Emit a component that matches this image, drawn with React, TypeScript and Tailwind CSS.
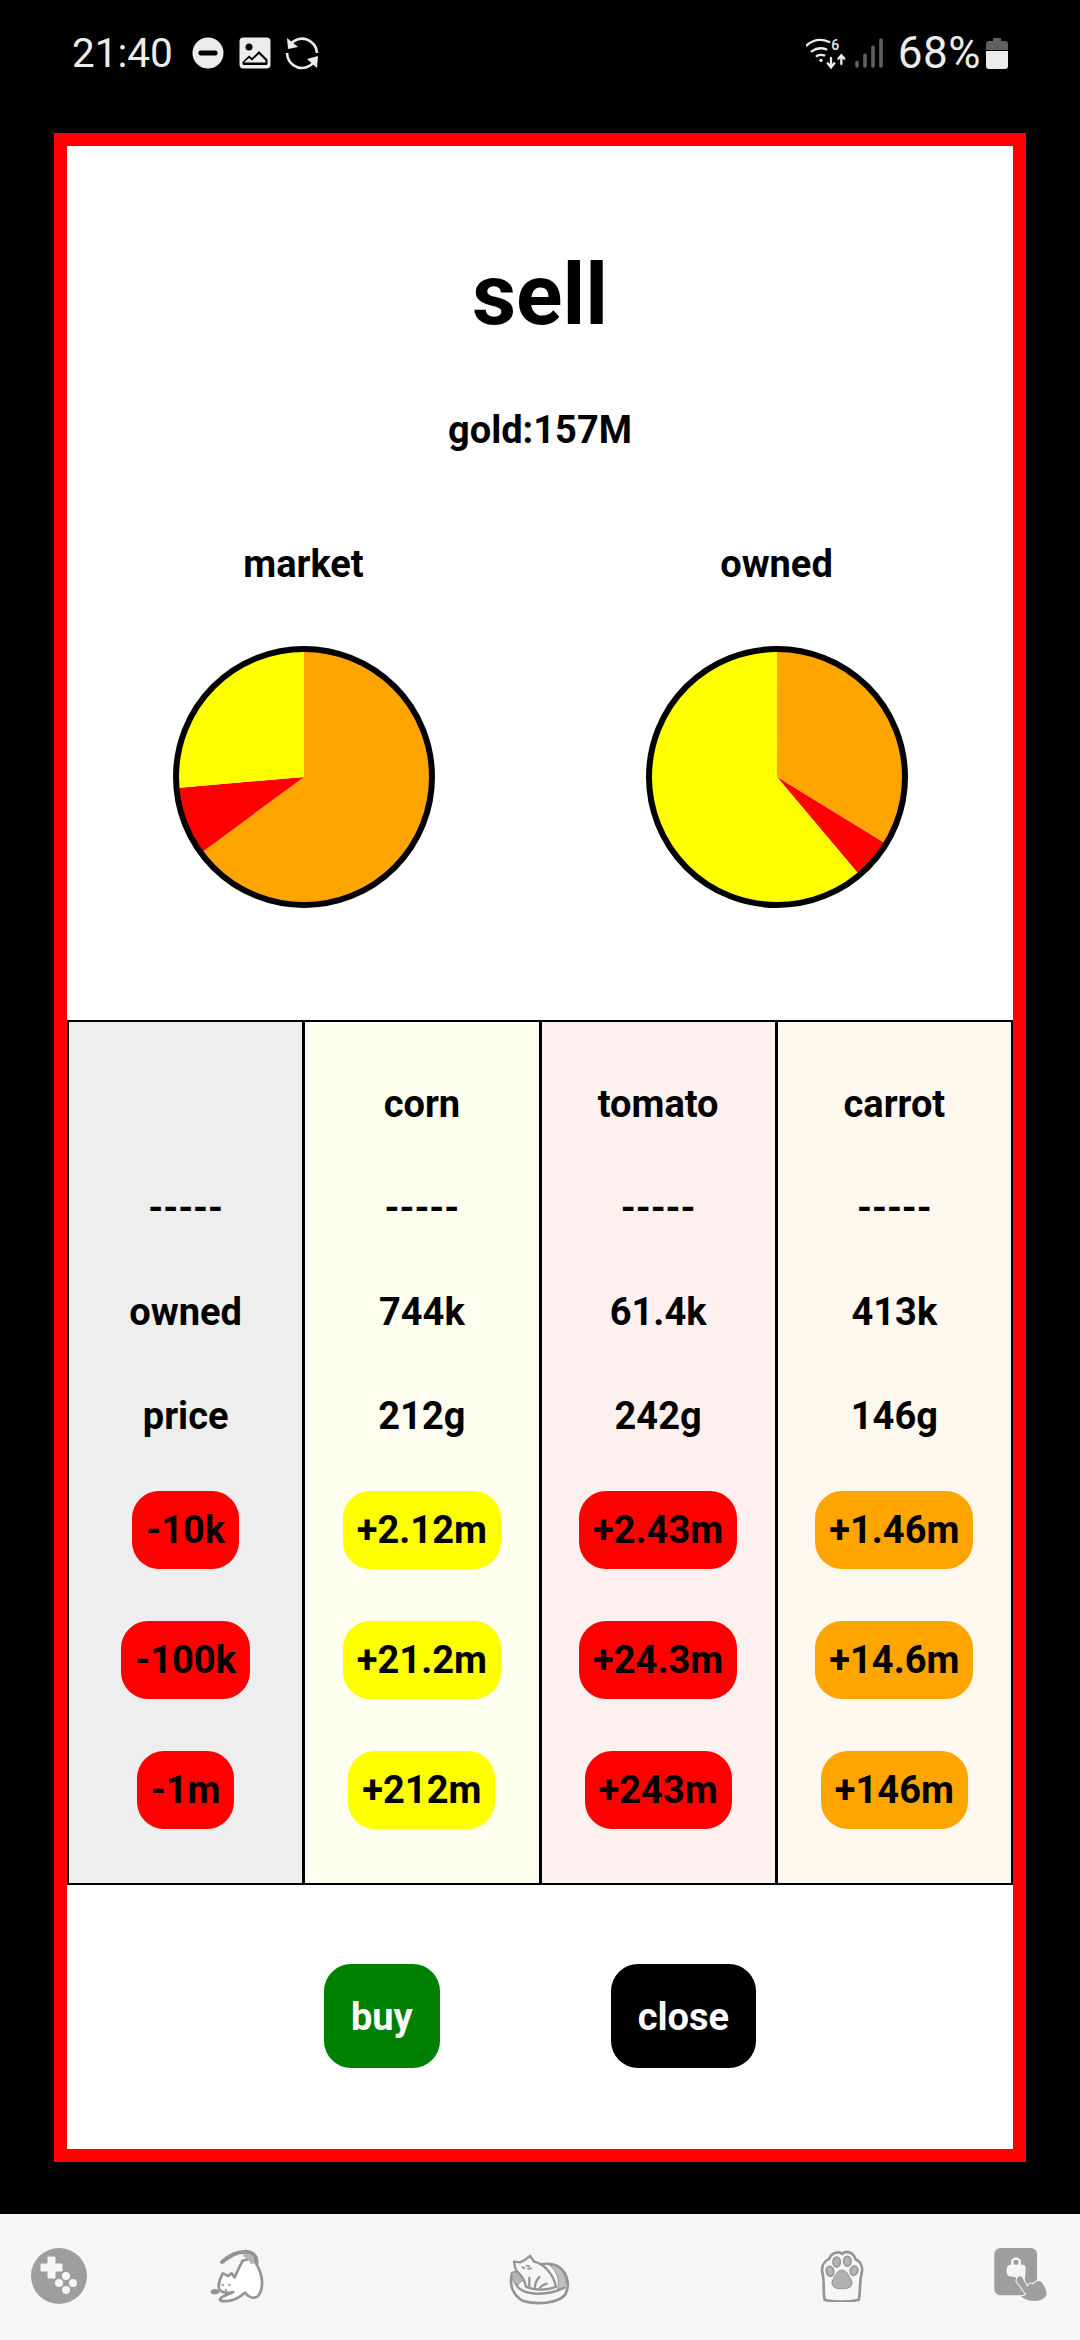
import React from "react";

const F = { fontFamily: "Roboto, sans-serif" };

function Pie({ a, b }: { a: number; b: number }) {
  const r = 128;
  const c = 132;
  const pt = (deg: number) => {
    const t = (deg * Math.PI) / 180;
    return `${c + r * Math.sin(t)} ${c - r * Math.cos(t)}`;
  };
  const arc = (s: number, e: number, col: string) => (
    <path d={`M${c} ${c}L${pt(s)}A${r} ${r} 0 ${e - s > 180 ? 1 : 0} 1 ${pt(e)}Z`} fill={col} />
  );
  return (
    <svg width="264" height="264" viewBox="0 0 264 264">
      {arc(0, a, "#ffa500")}
      {arc(a, b, "#ff0000")}
      {arc(b, 359.99, "#ffff00")}
      <circle cx={c} cy={c} r={r} fill="none" stroke="#000" strokeWidth="6" />
    </svg>
  );
}

function Column({ bg, head, owned, price, btn, items }: { bg: string; head: string; owned: string; price: string; btn: string; items: string[] }) {
  return (
    <div className={`flex flex-col items-center pt-[30px] pb-[54px] ${bg}`}>
      <div className="h-[104px] flex items-center">{head}</div>
      <div className="h-[104px] flex items-center">-----</div>
      <div className="h-[104px] flex items-center">{owned}</div>
      <div className="h-[104px] flex items-center">{price}</div>
      <div className="flex flex-col items-center gap-[52px] mt-[23px]">
        {items.map((t) => (
          <div key={t} className={`h-[78px] px-[14px] rounded-[27px] flex items-center ${btn}`}>{t}</div>
        ))}
      </div>
    </div>
  );
}

const G = "#9e9e9e";
const S = "#949494";

function GamepadIcon() {
  return (
    <svg width="56" height="56" viewBox="0 0 56 56">
      <circle cx="28" cy="28" r="28" fill={G} />
      <path d="M17 10h7v7h7v7h-7v7h-7v-7h-7v-7h7z" fill="#f6f6f8" stroke="#f6f6f8" strokeWidth="1" strokeLinejoin="round" transform="translate(0 -1)" />
      <circle cx="35" cy="28" r="4" fill="#f6f6f8" />
      <circle cx="28" cy="35" r="4" fill="#f6f6f8" />
      <circle cx="42" cy="35" r="4" fill="#f6f6f8" />
      <circle cx="35" cy="42" r="4" fill="#f6f6f8" />
    </svg>
  );
}

function CatIcon() {
  return (
    <svg width="75" height="70" viewBox="0 0 225 210" fill="none" strokeLinecap="round" strokeLinejoin="round">
      <path d="M128 62C115 88 110 98 104 112L95 100 85 108 68 100C60 118 52 135 58 148 65 160 88 160 100 156 80 165 62 170 60 178 62 186 75 184 90 182 110 178 125 166 135 158 145 170 155 178 172 170 188 155 190 120 180 95 172 75 165 60 155 55Z" fill="#fff" stroke={S} strokeWidth="8" />
      <path d="M66 66C85 50 105 36 130 36 155 33 170 45 170 68" stroke={S} strokeWidth="12" />
      <path d="M130 42C150 38 162 46 165 70L152 72C148 60 140 52 130 50Z" fill="#b5b5b5" />
      <ellipse cx="45" cy="155" rx="13" ry="8" fill={S} />
      <circle cx="68" cy="135" r="3.500" fill={S} />
      <circle cx="88" cy="135" r="3.500" fill={S} />
      <circle cx="78" cy="150" r="3.500" fill={S} />
    </svg>
  );
}

function BedIcon() {
  return (
    <svg width="80" height="70" viewBox="0 0 240 210" fill="none" strokeLinecap="round" strokeLinejoin="round">
      <path d="M36 85C28 115 35 150 70 168 110 180 170 176 195 150 210 125 205 85 175 65 160 55 140 55 120 58Z" fill="#f6f6f8" stroke={S} strokeWidth="8" />
      <path d="M150 60C175 60 200 85 198 118 190 130 180 135 172 132 182 105 170 80 150 60Z" fill="#c0c0c0" stroke={S} strokeWidth="3" />
      <path d="M36 82C55 78 70 90 72 102L50 122C40 112 34 100 36 82Z" fill="#b5b5b5" stroke={S} strokeWidth="3" />
      <path d="M48 118C62 148 130 158 194 128" stroke={S} strokeWidth="7" />
      <path d="M42 50 60 52C72 46 82 42 90 32L102 50C130 56 160 85 168 125 140 138 100 135 78 125 74 105 66 92 52 80 44 72 44 60 42 50Z" fill="#f6f6f8" stroke={S} strokeWidth="7" />
      <path d="M88 122V98M105 126C105 115 110 105 118 96M120 128C125 122 132 118 140 116" stroke={S} strokeWidth="7" />
      <path d="M66 66 74 70M80 62 88 64M84 72 94 70" stroke={S} strokeWidth="5" />
    </svg>
  );
}

function PawIcon() {
  return (
    <svg width="44" height="52" viewBox="0 0 132 156" fill="none" strokeLinejoin="round">
      <path d="M14 150C8 120 14 100 8 72 2 50 12 34 28 26 34 8 58 2 66 12 78 0 102 6 106 28 124 36 130 54 124 74 118 100 122 125 116 150 80 156 44 156 14 150Z" fill="#f6f6f8" stroke={S} strokeWidth="8" />
      <ellipse cx="50" cy="36" rx="11" ry="15" fill="#b5b5b5" stroke={S} strokeWidth="5" />
      <ellipse cx="82" cy="34" rx="11" ry="15" fill="#b5b5b5" stroke={S} strokeWidth="5" />
      <ellipse cx="30" cy="64" rx="11" ry="15" fill="#b5b5b5" stroke={S} strokeWidth="5" transform="rotate(-15 30 64)" />
      <ellipse cx="102" cy="62" rx="11" ry="14" fill="#b5b5b5" stroke={S} strokeWidth="5" transform="rotate(20 102 62)" />
      <path d="M66 60C80 60 86 78 94 90 102 106 88 118 66 116 44 118 30 106 38 90 46 78 52 60 66 60Z" fill="#b0b0b0" stroke={S} strokeWidth="3" />
    </svg>
  );
}

function LockIcon() {
  return (
    <svg width="75" height="70" viewBox="0 0 225 210">
      <rect x="28" y="24" width="128" height="142" rx="18" fill={G} />
      <path d="M78 74V66C78 48 108 48 108 66V74H114C120 74 122 80 122 88L120 118 100 130 92 112 70 108C64 104 64 92 66 82 67 76 72 74 78 74Z" fill="#f6f6f8" />
      <rect x="85" y="60" width="16" height="14" rx="6" fill={G} />
      <path d="M98 112C104 106 112 110 114 116L128 142C130 130 140 128 145 134 150 122 166 118 172 130 182 145 190 160 180 172 165 188 130 186 108 170L124 164 94 122Z" fill={G} stroke="#f6f6f8" strokeWidth="6" strokeLinejoin="round" paintOrder="stroke" />
    </svg>
  );
}

export default function App() {
  return (
    <div className="w-[1080px] h-[2340px] bg-black flex flex-col overflow-hidden font-bold text-black text-[38px]" style={F}>
      <div className="h-[133px] shrink-0 flex justify-between items-start pt-[28px] pl-[72px] pr-[72px] text-[#ececec] font-normal text-[40.500px] leading-[50px]">
        <div className="flex items-center">
          <span>21:40</span>
          <svg className="ml-[19px]" width="32" height="32" viewBox="0 0 32 32"><circle cx="16" cy="16" r="15.500" fill="#ececec"/><rect x="6.500" y="13.500" width="19" height="5" rx="2" fill="#000"/></svg>
          <svg className="ml-[15px]" width="32" height="32" viewBox="0 0 32 32"><rect x="0.500" y="0.500" width="31" height="31" rx="4" fill="#ececec"/><circle cx="10" cy="10" r="3.500" fill="#000"/><path d="M3.500 25 10 18.500 13 21 20 14 28.500 22.500V26.500A1.500 1.500 0 0 1 27 28H5A1.500 1.500 0 0 1 3.500 26.500Z" fill="#000"/><path d="M5.500 25 10 21 13 23.500 20 17 26.500 23.500V25.500H5.500Z" fill="#ececec"/></svg>
          <svg className="ml-[14px]" width="34" height="34" viewBox="0 0 34 34" fill="none" stroke="#ececec" strokeWidth="2.600"><path d="M5.500 8A15 15 0 0 1 32 17"/><path d="M29 26A15 15 0 0 1 2 17"/><path d="M2 2 3 13 13 11Z" fill="#ececec" stroke="none"/><path d="M32 32 33 20 22 23Z" fill="#ececec" stroke="none"/></svg>
        </div>
        <div className="flex items-center">
          <svg width="78" height="33" viewBox="15 35 234 99" fill="none" strokeLinecap="round">
            <g stroke="#ececec" strokeWidth="7">
              <path d="M17 60C38 42 62 40 85 50" />
              <path d="M32 78C46 68 60 66 76 72" />
              <path d="M47 92C54 88 62 88 70 90" />
              <path d="M90 98V124M80 114 90 126 100 114" />
              <path d="M121 116V92M112 100 121 90 130 100" />
            </g>
            <circle cx="60" cy="105" r="5" fill="#ececec" />
            <text x="91" y="74" fontSize="42" fontWeight="500" fill="#ececec" fontFamily="Roboto, sans-serif">6</text>
            <g stroke="#5f5f5f" strokeWidth="11">
              <path d="M168 112V122M192 90V122M216 66V122M240 44V122" />
            </g>
          </svg>
          <span className="ml-[14px] text-[44px] leading-[50px] tracking-[0.5px]">68%</span>
          <svg className="ml-[5px]" width="22" height="31" viewBox="0 0 22 31"><path d="M7 0H15V3H19Q22 3 22 6V12H0V6Q0 3 3 3H7Z" fill="#5f5f5f"/><path d="M0 13H22V28Q22 31 19 31H3Q0 31 0 28Z" fill="#ececec"/></svg>
        </div>
      </div>

      <div className="mx-[54px] h-[2029px] shrink-0 border-[13px] border-[#ff0000] bg-white flex flex-col items-center">
        <h1 className="mt-[99px] text-[86px] leading-[100px] font-bold">sell</h1>
        <div className="mt-[62px] leading-[46px]">gold:157M</div>
        <div className="self-stretch mt-[88px] grid grid-cols-2">
          {[
            { t: "market", a: 233.6, b: 265.1 },
            { t: "owned", a: 121.5, b: 139.9 },
          ].map((p) => (
            <div key={p.t} className="flex flex-col items-center">
              <div className="leading-[46px]">{p.t}</div>
              <div className="mt-[58px]"><Pie a={p.a} b={p.b} /></div>
            </div>
          ))}
        </div>
        <div className="self-stretch mt-[111px] grid grid-cols-4 gap-[3px] p-[2px] bg-black">
          <Column bg="bg-[#eeeeee]" head="" owned="owned" price="price" btn="bg-[#ff0000]" items={["-10k", "-100k", "-1m"]} />
          <Column bg="bg-[#fffff0]" head="corn" owned="744k" price="212g" btn="bg-[#ffff00]" items={["+2.12m", "+21.2m", "+212m"]} />
          <Column bg="bg-[#fff0f0]" head="tomato" owned="61.4k" price="242g" btn="bg-[#ff0000]" items={["+2.43m", "+24.3m", "+243m"]} />
          <Column bg="bg-[#fff8ee]" head="carrot" owned="413k" price="146g" btn="bg-[#ffa500]" items={["+1.46m", "+14.6m", "+146m"]} />
        </div>
        <div className="flex mt-[79px] items-center gap-[171px] text-white">
          <div className="h-[104px] pt-[3px] px-[27px] rounded-[27px] bg-[#008000] flex items-center">buy</div>
          <div className="h-[104px] pt-[3px] px-[27px] rounded-[27px] bg-black flex items-center">close</div>
        </div>
      </div>

      <div className="mt-auto h-[126px] bg-[#f6f6f8] shrink-0 flex items-start pl-[31px]">
        <div className="mt-[34px]"><GamepadIcon /></div>
        <div className="ml-[113px] mt-[26px]"><CatIcon /></div>
        <div className="ml-[225px] mt-[31px]"><BedIcon /></div>
        <div className="ml-[240px] mt-[36px]"><PawIcon /></div>
        <div className="ml-[121px] mt-[26px]"><LockIcon /></div>
      </div>
    </div>
  );
}
